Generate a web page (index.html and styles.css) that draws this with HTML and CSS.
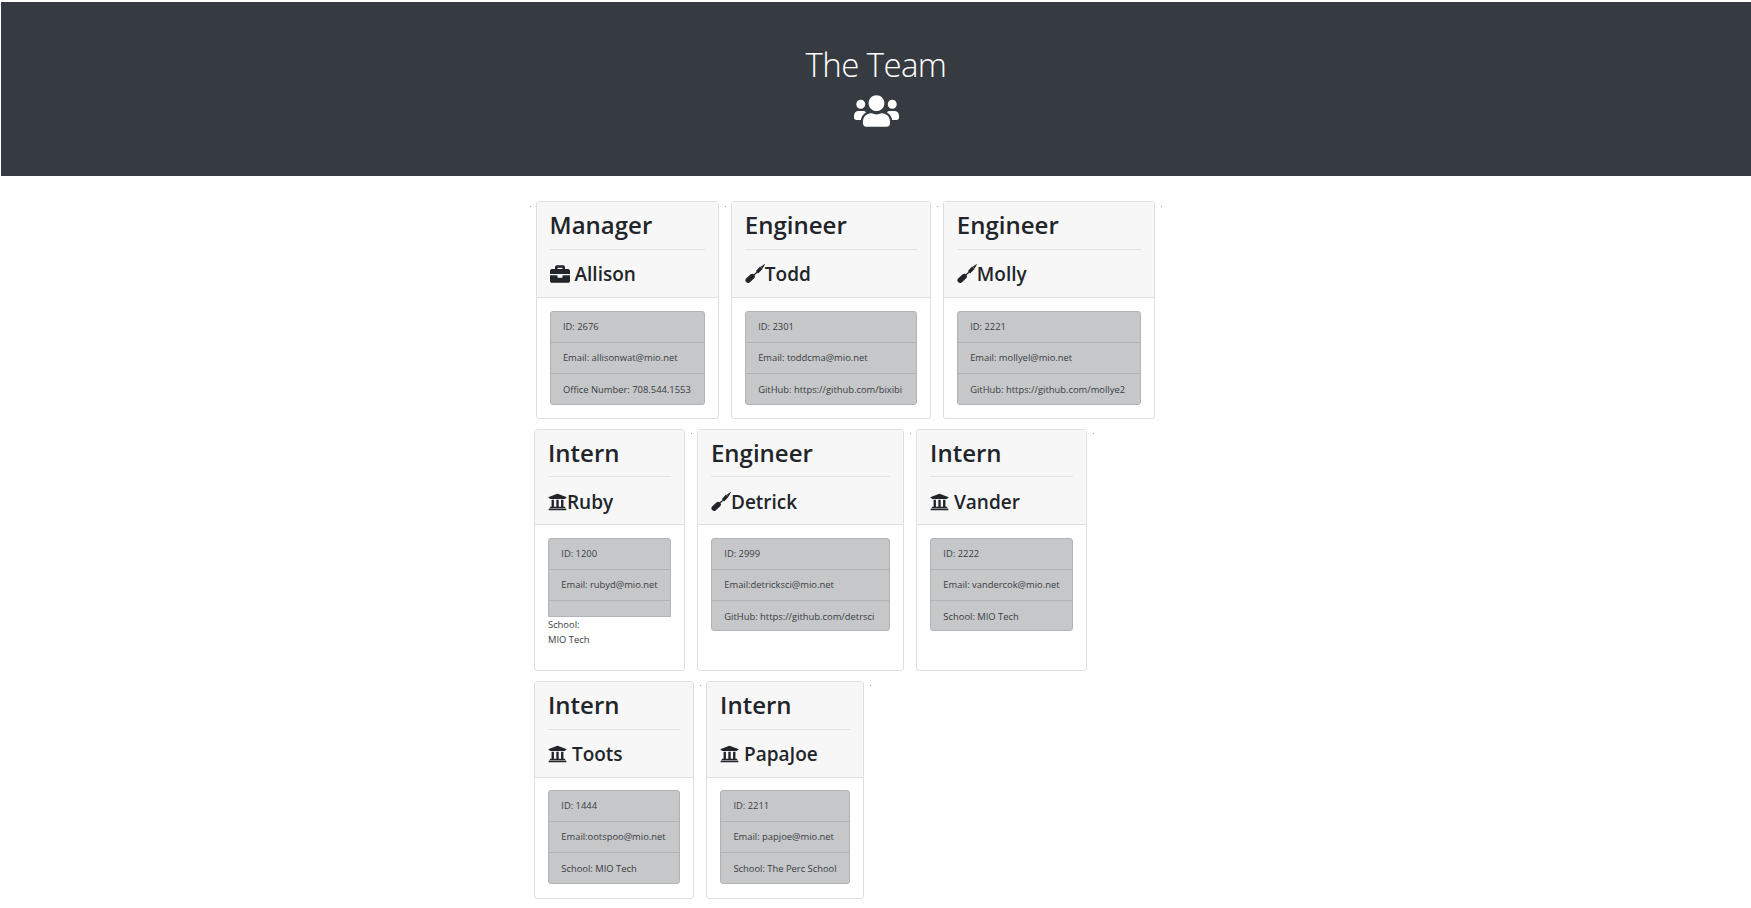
FILE: index.html
```html
<!DOCTYPE html>
<html lang="en">
<head>
    <meta charset="UTF-8">
    <meta name="viewport" content="width=device-width, initial-scale=1.0">
    <title>The Team</title>
    <link rel="stylesheet" href="styles.css">
</head>
<body>
    <svg class="defs" aria-hidden="true">
        <symbol id="i-users" viewBox="0 0 640 512"><path d="M96 224c35.3 0 64-28.7 64-64s-28.7-64-64-64-64 28.7-64 64 28.7 64 64 64zm448 0c35.3 0 64-28.7 64-64s-28.7-64-64-64-64 28.7-64 64 28.7 64 64 64zm32 32h-64c-17.6 0-33.5 7.1-45.1 18.6 40.3 22.1 68.9 62 75.1 109.4h66c17.7 0 32-14.3 32-32v-32c0-35.3-28.7-64-64-64zm-256 0c61.9 0 112-50.1 112-112S381.9 32 320 32 208 82.1 208 144s50.1 112 112 112zm76.8 32h-8.3c-20.8 10-43.9 16-68.5 16s-47.6-6-68.5-16h-8.3C179.6 288 128 339.6 128 403.2V432c0 26.5 21.5 48 48 48h288c26.5 0 48-21.5 48-48v-28.8c0-63.6-51.6-115.2-115.2-115.2zm-223.7-13.4C161.5 263.1 145.6 256 128 256H64c-35.3 0-64 28.7-64 64v32c0 17.7 14.3 32 32 32h65.9c6.3-47.4 34.9-87.3 75.2-109.4z"/></symbol>
        <symbol id="i-briefcase" viewBox="0 0 512 512"><path d="M320 336c0 8.84-7.16 16-16 16h-96c-8.84 0-16-7.16-16-16v-48H0v144c0 25.6 22.4 48 48 48h416c25.6 0 48-22.4 48-48V288H320v48zm144-208h-80V80c0-25.6-22.4-48-48-48H176c-25.6 0-48 22.4-48 48v48H48c-25.6 0-48 22.4-48 48v80h512v-80c0-25.6-22.4-48-48-48zm-144 0H192V96h128v32z"/></symbol>
        <symbol id="i-school" viewBox="0 0 512 512"><path d="M496 128v16a8 8 0 0 1-8 8h-24v12c0 6.627-5.373 12-12 12H60c-6.627 0-12-5.373-12-12v-12H24a8 8 0 0 1-8-8v-16a8 8 0 0 1 4.941-7.392l232-88a7.996 7.996 0 0 1 6.118 0l232 88A8 8 0 0 1 496 128zm-24 304H40c-13.255 0-24 10.745-24 24v16a8 8 0 0 0 8 8h464a8 8 0 0 0 8-8v-16c0-13.255-10.745-24-24-24zM96 192v192H60c-6.627 0-12 5.373-12 12v20h416v-20c0-6.627-5.373-12-12-12h-36V192h-64v192h-64V192h-64v192h-64V192H96z"/></symbol>
        <symbol id="i-tool" viewBox="0 0 64 64">
            <path d="M10 52L23 40" stroke="#212529" stroke-width="17" stroke-linecap="round" fill="none"/>
            <path d="M23 40L40 25" stroke="#212529" stroke-width="4" fill="none"/>
            <path d="M35 22L48 8 56 16 42 30z"/>
            <path d="M50 9L63 0 64 1 56 15z"/>
        </symbol>
    </svg>

    <header class="banner">
        <h1>The Team</h1>
        <svg class="banner-icon"><use href="#i-users"/></svg>
    </header>

    <main>
        <div class="row row-first">
            <span class="dot"></span>
            <section class="card w-allison">
                <div class="card-head">
                    <h2>Manager</h2>
                    <h3><svg class="icon"><use href="#i-briefcase"/></svg> Allison</h3>
                </div>
                <div class="card-body">
                    <ul class="info">
                        <li>ID: 2676</li>
                        <li>Email: allisonwat@mio.net</li>
                        <li>Office Number: 708.544.1553</li>
                    </ul>
                </div>
            </section>
            <span class="dot"></span>
            <section class="card w-todd">
                <div class="card-head">
                    <h2>Engineer</h2>
                    <h3><svg class="icon"><use href="#i-tool"/></svg>Todd</h3>
                </div>
                <div class="card-body">
                    <ul class="info">
                        <li>ID: 2301</li>
                        <li>Email: toddcma@mio.net</li>
                        <li>GitHub: https://github.com/bixibi</li>
                    </ul>
                </div>
            </section>
            <span class="dot"></span>
            <section class="card w-molly">
                <div class="card-head">
                    <h2>Engineer</h2>
                    <h3><svg class="icon"><use href="#i-tool"/></svg>Molly</h3>
                </div>
                <div class="card-body">
                    <ul class="info">
                        <li>ID: 2221</li>
                        <li>Email: mollyel@mio.net</li>
                        <li>GitHub: https://github.com/mollye2</li>
                    </ul>
                </div>
            </section>
            <span class="dot"></span>
        </div>

        <div class="row">
            <section class="card w-ruby">
                <div class="card-head">
                    <h2>Intern</h2>
                    <h3><svg class="icon icon-school"><use href="#i-school"/></svg>Ruby</h3>
                </div>
                <div class="card-body">
                    <ul class="info info-square">
                        <li>ID: 1200</li>
                        <li>Email: rubyd@mio.net</li>
                        <li class="empty"></li>
                    </ul>
                    <p class="loose">School:<br>MIO Tech</p>
                </div>
            </section>
            <span class="dot"></span>
            <section class="card w-detrick">
                <div class="card-head">
                    <h2>Engineer</h2>
                    <h3><svg class="icon"><use href="#i-tool"/></svg>Detrick</h3>
                </div>
                <div class="card-body">
                    <ul class="info">
                        <li>ID: 2999</li>
                        <li>Email:detricksci@mio.net</li>
                        <li>GitHub: https://github.com/detrsci</li>
                    </ul>
                </div>
            </section>
            <span class="dot"></span>
            <section class="card w-vander">
                <div class="card-head">
                    <h2>Intern</h2>
                    <h3><svg class="icon icon-school"><use href="#i-school"/></svg> Vander</h3>
                </div>
                <div class="card-body">
                    <ul class="info">
                        <li>ID: 2222</li>
                        <li>Email: vandercok@mio.net</li>
                        <li>School: MIO Tech</li>
                    </ul>
                </div>
            </section>
            <span class="dot"></span>
        </div>

        <div class="row">
            <section class="card w-toots">
                <div class="card-head">
                    <h2>Intern</h2>
                    <h3><svg class="icon icon-school"><use href="#i-school"/></svg> Toots</h3>
                </div>
                <div class="card-body">
                    <ul class="info">
                        <li>ID: 1444</li>
                        <li>Email:ootspoo@mio.net</li>
                        <li>School: MIO Tech</li>
                    </ul>
                </div>
            </section>
            <span class="dot"></span>
            <section class="card w-papajoe">
                <div class="card-head">
                    <h2>Intern</h2>
                    <h3><svg class="icon icon-school"><use href="#i-school"/></svg> PapaJoe</h3>
                </div>
                <div class="card-body">
                    <ul class="info">
                        <li>ID: 2211</li>
                        <li>Email: papjoe@mio.net</li>
                        <li>School: The Perc School</li>
                    </ul>
                </div>
            </section>
            <span class="dot"></span>
        </div>
    </main>
</body>
</html>
```

FILE: styles.css
```css
* {
    box-sizing: border-box;
}
body {
    font-family: 'Open Sans', 'Noto Sans', sans-serif;
    background-color: #ffffff;
    color: #212529;
    margin: 2px 0 0 1px;
    font-size: 9.4px;
}
.defs {
    display: none;
}
.banner {
    background-color: #363a41;
    color: #ffffff;
    height: 174px;
    display: flex;
    flex-direction: column;
    align-items: center;
    padding-top: 37px;
}
.banner h1 {
    margin: 0;
    font-size: 33px;
    font-weight: 300;
    letter-spacing: -0.6px;
    line-height: 52px;
}
.banner-icon {
    width: 45px;
    height: 36px;
    fill: #ffffff;
    margin-top: 2px;
}
main {
    padding-top: 25px;
}
.row {
    display: flex;
    padding-left: 533.3px;
    margin-bottom: 9.7px;
}
.row-first {
    padding-left: 528.6px;
}
.dot {
    width: 1px;
    height: 1px;
    margin: 4.5px 5.3px 0 0;
    background-color: #9a9a9a;
    flex: none;
}
.card {
    flex: none;
    margin-right: 6.3px;
    background-color: #ffffff;
    border: 1px solid #dfdfdf;
    border-radius: 3px;
}
.w-allison { width: 182.7px; }
.w-todd { width: 199.4px; }
.w-molly { width: 211.4px; }
.w-ruby { width: 150.4px; }
.w-detrick { width: 206.5px; }
.w-vander { width: 170.6px; }
.w-toots { width: 159.5px; }
.w-papajoe { width: 157.6px; }
.card-head {
    height: 95.8px;
    padding: 0 12.7px;
    background-color: #f7f7f7;
    border-bottom: 1px solid #dfdfdf;
}
.card-head h2 {
    margin: 0;
    padding-top: 5px;
    height: 47.8px;
    font-size: 24px;
    font-weight: 600;
    line-height: 36px;
    border-bottom: 1px solid #e3e3e3;
}
.card-head h3 {
    margin: 0;
    padding-top: 9.5px;
    font-size: 19px;
    font-weight: 600;
    line-height: 30px;
    white-space: nowrap;
}
.icon {
    width: 20px;
    height: 20px;
    fill: #212529;
    vertical-align: -3px;
}
.icon-school {
    width: 19px;
}
.card-body {
    padding: 12.6px 12.7px 14.2px;
}
.row-first .card-body {
    padding: 13.4px 12.7px;
}
.info {
    list-style: none;
    margin: 0;
    padding: 0;
    border: 1px solid #b2b3b5;
    border-radius: 3px;
    background-color: #c6c7c9;
    color: #383d41;
}
.info li {
    height: 31px;
    padding: 0 12.3px;
    line-height: 30px;
    white-space: nowrap;
    border-bottom: 1px solid #b2b3b5;
}
.info li:last-child {
    height: 29.4px;
    line-height: 32px;
    border-bottom: none;
}
.info li.empty {
    height: 15.3px;
}
.info-square {
    border-radius: 3px 3px 0 0;
}
.loose {
    margin: 0 0 8.5px;
    line-height: 15px;
    color: #383d41;
}
```
